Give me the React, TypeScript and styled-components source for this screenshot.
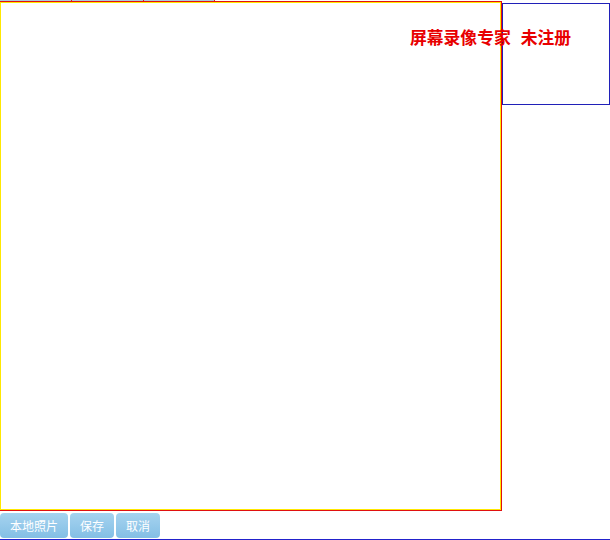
import React from "react";
import styled, { createGlobalStyle } from "styled-components";

const GlobalStyle = createGlobalStyle`
  html, body { margin: 0; padding: 0; background: #ffffff; }
  body { font-family: "Liberation Sans", "Noto Sans CJK SC", sans-serif; }
`;

const Page = styled.div`
  position: relative;
  width: 610px;
  height: 540px;
  display: flex;
  flex-direction: column;
  overflow: hidden;
  border-bottom: 1px solid #2222cc;
  box-sizing: border-box;
`;

const TabBar = styled.div`
  display: flex;
  height: 1px;
`;

const Tab = styled.div<{ $w: number }>`
  width: ${(p) => p.$w}px;
  height: 1px;
  background: #a9c8de;
  border-right: 1px solid #d42020;
  box-sizing: border-box;
`;

const Main = styled.div`
  display: flex;
  align-items: flex-start;
`;

const Stage = styled.div`
  width: 502px;
  height: 510px;
  box-sizing: border-box;
  border-top: 1px solid #e01010;
  border-right: 1px solid #e01010;
  border-bottom: 1px solid #e01010;
  box-shadow: inset 0 0 0 1px #ffe800;
  background: #ffffff;
`;

const Preview = styled.div`
  width: 108px;
  height: 102px;
  margin-top: 2px;
  box-sizing: border-box;
  border: 1px solid #2020b8;
  background: #ffffff;
`;

const ButtonBar = styled.div`
  display: flex;
  gap: 2px;
  margin-top: 2px;
`;

const Button = styled.button<{ $w: number }>`
  width: ${(p) => p.$w}px;
  height: 25px;
  padding: 0;
  border: none;
  border-radius: 4px;
  background: linear-gradient(#a6d3ef, #84bfe5);
  color: #ffffff;
  font-family: "Noto Sans CJK SC", sans-serif;
  font-size: 12px;
  line-height: 25px;
  cursor: pointer;
`;

const Watermark = styled.div`
  position: absolute;
  left: 410px;
  top: 27px;
  display: flex;
  gap: 10px;
  color: #e80000;
  font-family: "Noto Sans CJK SC", serif;
  font-weight: 700;
  font-size: 16.8px;
  line-height: 21px;
  white-space: nowrap;
`;

export default function App() {
  return (
    <>
      <GlobalStyle />
      <Page>
        <TabBar>
          <Tab $w={72} />
          <Tab $w={72} />
          <Tab $w={71} />
        </TabBar>
        <Main>
          <Stage />
          <Preview />
        </Main>
        <ButtonBar>
          <Button $w={68}>本地照片</Button>
          <Button $w={44}>保存</Button>
          <Button $w={44}>取消</Button>
        </ButtonBar>
        <Watermark>
          <span>屏幕录像专家</span>
          <span>未注册</span>
        </Watermark>
      </Page>
    </>
  );
}
